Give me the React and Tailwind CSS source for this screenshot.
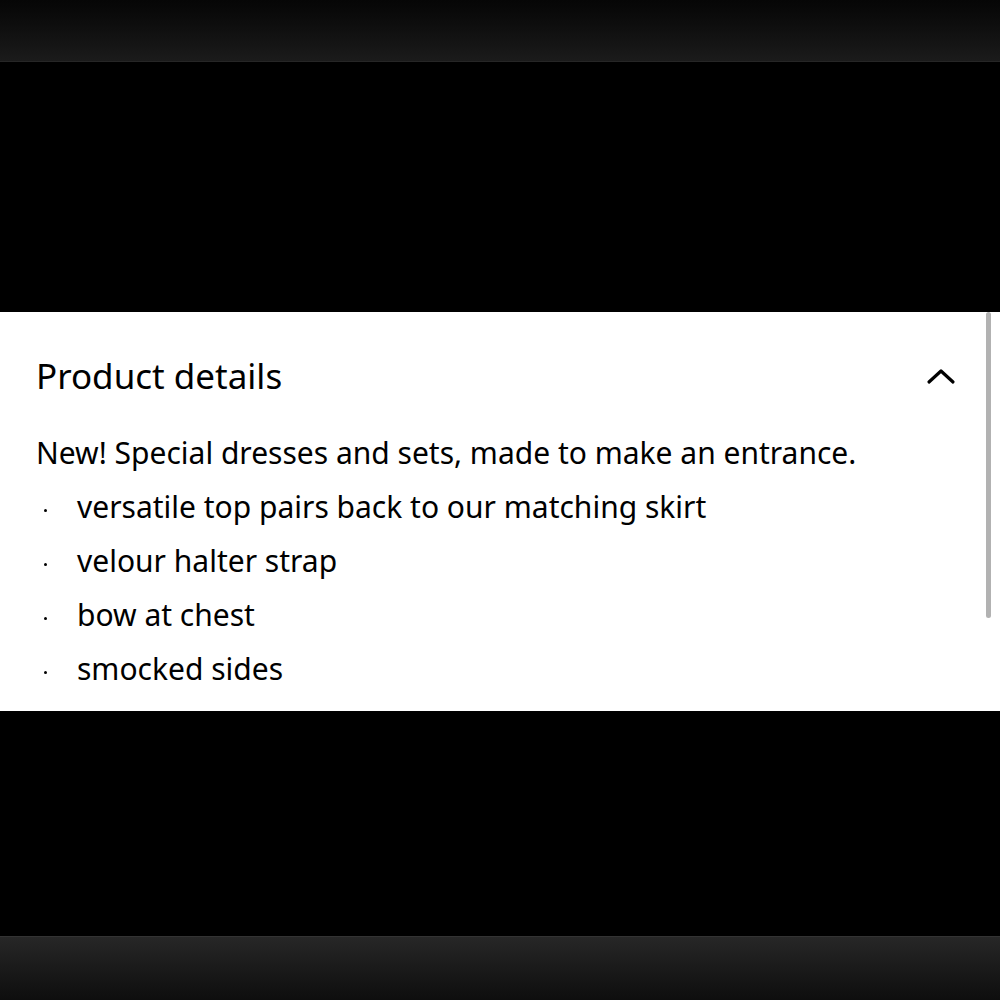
import React from "react";

const bullets = [
  "versatile top pairs back to our matching skirt",
  "velour halter strap",
  "bow at chest",
  "smocked sides",
];

const ChevronUp = () => (
  <svg width="30" height="20" viewBox="0 0 30 20" fill="none">
    <path d="M3 16 L15 5 L27 16" stroke="#000" strokeWidth="3.2" strokeLinecap="round" strokeLinejoin="round" />
  </svg>
);

export default function App() {
  return (
    <div className="w-[1000px] h-[1000px] flex flex-col bg-black overflow-hidden" style={{ fontFamily: "'Noto Sans', sans-serif" }}>
      <div className="h-[62px] bg-gradient-to-b from-[#060606] to-[#1b1b1b] border-b border-[#262626]" />
      <div className="h-[250px] bg-black" />
      <div className="relative h-[399px] bg-white overflow-hidden">
        <div className="px-9 pt-[40px]">
          <div className="flex items-center justify-between">
            <h2 className="text-[35px] leading-[48px] text-black">Product details</h2>
            <div className="mr-[8px]">
              <ChevronUp />
            </div>
          </div>
          <p className="mt-[34px] text-[30px] leading-[38px] text-black">
            New! Special dresses and sets, made to make an entrance.
          </p>
          <ul className="mt-[7px]">
            {bullets.map((b) => (
              <li key={b} className="flex items-center h-[54px] text-[30px] text-black">
                <span className="w-[41px] flex pl-[8px] pt-[8px]">
                  <span className="block w-[3px] h-[3px] rounded-full bg-black" />
                </span>
                <span>{b}</span>
              </li>
            ))}
            <li className="flex items-center h-[52px] text-[30px] text-black">
              <span className="w-[41px]" />
              <span>#810085</span>
            </li>
          </ul>
        </div>
        <div className="absolute right-[9px] top-0 w-[5px] h-[306px] rounded-full bg-[#b2b2b2]" />
      </div>
      <div className="flex-1 bg-black" />
      <div className="h-[64px] bg-gradient-to-b from-[#272727] to-[#0e0e0e] border-t border-[#333]" />
    </div>
  );
}
